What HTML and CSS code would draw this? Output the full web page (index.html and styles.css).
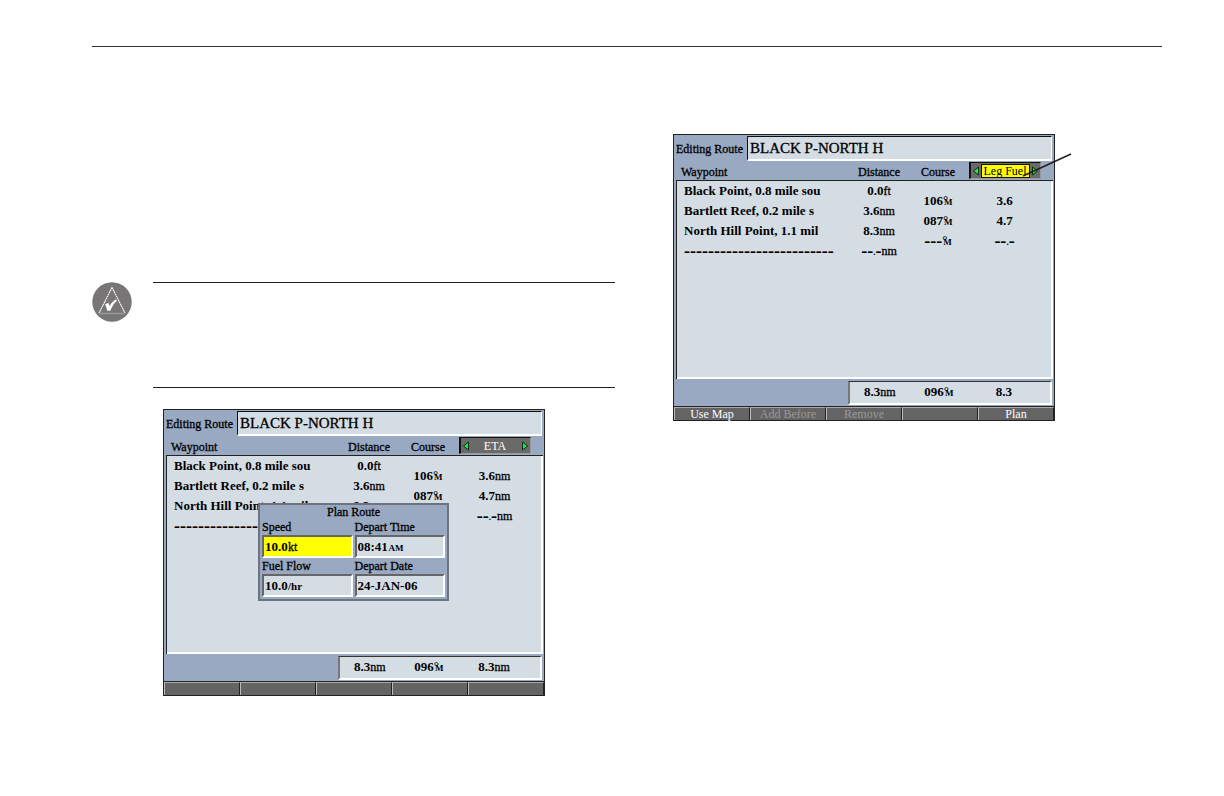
FILE: index.html
```html
<!DOCTYPE html>
<html lang="en">
<head>
<meta charset="utf-8">
<meta name="viewport" content="width=device-width, initial-scale=1">
<title>Route planning</title>
<link rel="stylesheet" href="styles.css">
</head>
<body>
<main class="page">
  <section class="column column-left">
    <div class="note">
      <svg class="note-icon" viewBox="0 0 40 40" aria-hidden="true">
        <circle cx="20" cy="20" r="19.7" fill="#777576"/>
        <path d="M20 5.500 7 31" fill="none" stroke="#fff" stroke-width="1.100" stroke-dasharray="1.800 .5"/>
        <path d="M20 5.500 33 31" fill="none" stroke="#fff" stroke-width="1.100" stroke-dasharray="1.800 .5"/>
        <path d="M7 31.500h26" stroke="#999" stroke-width="1.500"/>
        <path d="M13 22.500l3.200-1.800 1.400 3.300c1.600-2.800 3.400-5 6.400-6.800l.8 1.600c-2.600 2.700-4.700 5.500-6.500 10h-3c-.6-2.500-1.100-4.500-2.300-6.300z" fill="#fff"/>
      </svg>
      <div class="note-body"></div>
    </div>
    <div class="device">
      <div class="title-bar">
        <label for="route-a">Editing Route</label>
        <input id="route-a" class="route-name" type="text" value="BLACK P-NORTH H">
      </div>
      <table class="legs">
        <thead>
          <tr>
            <th class="c-way">Waypoint</th><th class="c-dist">Distance</th><th class="c-course">Course</th>
            <th class="c-value">
              <div class="selector">
                <button type="button" aria-label="Previous field"><svg viewBox="0 0 8 10"><path d="M6.500 1v8L1.500 5z"/></svg></button>
                <span class="selector-text">ETA</span>
                <button type="button" aria-label="Next field"><svg viewBox="0 0 8 10"><path d="M1.500 1v8l5-4z"/></svg></button>
              </div>
            </th>
          </tr>
        </thead>
        <tbody>
          <tr class="pad"><td colspan="4"></td></tr>
          <tr><td rowspan="2" class="c-way">Black Point, 0.8 mile sou</td><td rowspan="2">0.0<span class="unit">ft</span></td><td></td><td></td></tr>
          <tr><td rowspan="2">106<span class="deg">°</span><span class="mag">M</span></td><td rowspan="2" class="c-value">3.6<span class="unit">nm</span></td></tr>
          <tr><td rowspan="2" class="c-way">Bartlett Reef, 0.2 mile s</td><td rowspan="2">3.6<span class="unit">nm</span></td></tr>
          <tr><td rowspan="2">087<span class="deg">°</span><span class="mag">M</span></td><td rowspan="2" class="c-value">4.7<span class="unit">nm</span></td></tr>
          <tr><td rowspan="2" class="c-way">North Hill Point, 1.1 mil</td><td rowspan="2">8.3<span class="unit">nm</span></td></tr>
          <tr><td rowspan="2"><span class="blank">---</span><span class="deg">°</span><span class="mag">M</span></td><td rowspan="2" class="c-value"><span class="blank">--</span><span class="mag">.</span><span class="blank">-</span><span class="unit">nm</span></td></tr>
          <tr><td rowspan="2" class="c-way"><span class="blank">-------------------------</span></td><td rowspan="2"><span class="blank">--</span><span class="mag">.</span><span class="blank">-</span><span class="unit">nm</span></td></tr>
          <tr><td></td><td></td></tr>
          <tr class="rest"><td colspan="4"></td></tr>
        </tbody>
      </table>
      <div class="totals-bar">
        <div class="totals">
          <span>8.3<span class="unit">nm</span></span><span>096<span class="deg">°</span><span class="mag">M</span></span><span>8.3<span class="unit">nm</span></span>
        </div>
      </div>
      <div class="softkeys">
        <button type="button" aria-label="Key 1"></button><button type="button" aria-label="Key 2"></button><button type="button" aria-label="Key 3"></button><button type="button" aria-label="Key 4"></button><button type="button" aria-label="Key 5"></button>
      </div>
      <form class="plan">
        <h2>Plan Route</h2>
        <div class="plan-field">
          <label for="speed">Speed</label>
          <div class="box active"><input id="speed" class="w-num" type="text" value="10.0"><span class="unit">kt</span></div>
        </div>
        <div class="plan-field">
          <label for="time">Depart Time</label>
          <div class="box"><input id="time" class="w-time" type="text" value="08:41"><span class="mag">AM</span></div>
        </div>
        <div class="plan-field">
          <label for="flow">Fuel Flow</label>
          <div class="box"><input id="flow" class="w-num" type="text" value="10.0"><span class="rate">/hr</span></div>
        </div>
        <div class="plan-field">
          <label for="date">Depart Date</label>
          <div class="box"><input id="date" class="w-full" type="text" value="24-JAN-06"></div>
        </div>
      </form>
    </div>
  </section>

  <section class="column column-right">
    <div class="device">
      <div class="title-bar">
        <label for="route-b">Editing Route</label>
        <input id="route-b" class="route-name" type="text" value="BLACK P-NORTH H">
      </div>
      <table class="legs">
        <thead>
          <tr>
            <th class="c-way">Waypoint</th><th class="c-dist">Distance</th><th class="c-course">Course</th>
            <th class="c-value">
              <div class="selector">
                <button type="button" aria-label="Previous field"><svg viewBox="0 0 8 10"><path d="M6.500 1v8L1.500 5z"/></svg></button>
                <span class="selector-text chosen">Leg Fuel</span>
                <button type="button" aria-label="Next field"><svg viewBox="0 0 8 10"><path d="M1.500 1v8l5-4z"/></svg></button>
              </div>
            </th>
          </tr>
        </thead>
        <tbody>
          <tr class="pad"><td colspan="4"></td></tr>
          <tr><td rowspan="2" class="c-way">Black Point, 0.8 mile sou</td><td rowspan="2">0.0<span class="unit">ft</span></td><td></td><td></td></tr>
          <tr><td rowspan="2">106<span class="deg">°</span><span class="mag">M</span></td><td rowspan="2" class="c-value">3.6</td></tr>
          <tr><td rowspan="2" class="c-way">Bartlett Reef, 0.2 mile s</td><td rowspan="2">3.6<span class="unit">nm</span></td></tr>
          <tr><td rowspan="2">087<span class="deg">°</span><span class="mag">M</span></td><td rowspan="2" class="c-value">4.7</td></tr>
          <tr><td rowspan="2" class="c-way">North Hill Point, 1.1 mil</td><td rowspan="2">8.3<span class="unit">nm</span></td></tr>
          <tr><td rowspan="2"><span class="blank">---</span><span class="deg">°</span><span class="mag">M</span></td><td rowspan="2" class="c-value"><span class="blank">--</span><span class="mag">.</span><span class="blank">-</span></td></tr>
          <tr><td rowspan="2" class="c-way"><span class="blank">-------------------------</span></td><td rowspan="2"><span class="blank">--</span><span class="mag">.</span><span class="blank">-</span><span class="unit">nm</span></td></tr>
          <tr><td></td><td></td></tr>
          <tr class="rest"><td colspan="4"></td></tr>
        </tbody>
      </table>
      <div class="totals-bar">
        <div class="totals">
          <span>8.3<span class="unit">nm</span></span><span>096<span class="deg">°</span><span class="mag">M</span></span><span>8.3</span>
        </div>
      </div>
      <div class="softkeys">
        <button type="button">Use Map</button><button type="button" disabled>Add Before</button><button type="button" disabled>Remove</button><button type="button" aria-label="Key 4"></button><button type="button">Plan</button>
      </div>
      <svg class="pointer" viewBox="0 0 50 24" aria-hidden="true"><path d="M1 23 49 1" stroke="#231f20" stroke-width="1.500"/></svg>
    </div>
  </section>
</main>
</body>
</html>
```
FILE: styles.css
```css
* { box-sizing: border-box; }

body {
  margin: 0;
  background: #fff;
  color: #000;
  font: 12px/20px "Liberation Serif", serif;
}

button, input { font: inherit; color: inherit; }

.page {
  margin: 46px 62px 0 92px;
  border-top: 1px solid #333;
  display: grid;
  grid-template-columns: minmax(0, 523fr) minmax(0, 489fr);
  gap: 58px;
  align-items: start;
}

.column-left { padding-top: 235px; }
.column-right { padding-top: 87px; }
.column-left .device { margin: 21px 0 0 71px; }

.note {
  display: grid;
  grid-template-columns: 40px 1fr;
  gap: 21px;
}
.note-icon { width: 40px; height: 40px; }
.note-body {
  min-height: 106px;
  border-top: 1px solid #231f20;
  border-bottom: 1px solid #231f20;
}

.device {
  position: relative;
  max-width: 382px;
  border: 1px solid #222;
  background: #99a9c2;
}

.title-bar {
  display: flex;
  align-items: center;
  padding: 1px 2px 0 1px;
}
.title-bar label {
  flex: 0 0 72px;
  padding-left: 1px;
  -webkit-text-stroke: 0.3px #000;
}
.route-name {
  flex: 1;
  min-width: 0;
  height: 25px;
  padding: 0 2px;
  border: 1px solid #fff;
  border-bottom-width: 2px;
  border-top-color: #111;
  border-left-color: #111;
  border-radius: 0;
  background: #d5dde4;
  font-size: 15px;
  -webkit-text-stroke: 0.3px #000;
}

.legs {
  width: 100%;
  padding: 0 1px 0 2px;
  table-layout: fixed;
  border-spacing: 0;
}
.legs th, .legs td {
  height: 10px;
  padding: 0;
  line-height: 20px;
  text-align: center;
  white-space: nowrap;
}
.legs th {
  height: 19px;
  padding-top: 3px;
  font-weight: 400;
  line-height: 16px;
  vertical-align: top;
  -webkit-text-stroke: 0.3px #000;
}
.legs td { font-size: 13px; font-weight: 700; }
.legs .c-way { padding-left: 8px; text-align: left; }
.legs th.c-way { width: 168px; padding-left: 5px; }
.c-dist { width: 70px; }
.c-course { width: 48px; }
.legs .c-value { padding-right: 6px; }
.legs th.c-value { padding-top: 1px; }
.legs tbody {
  background: #d5dde4;
  box-shadow: inset 1px 1px #222, inset -2px -2px #fff;
}
.legs .pad td { height: 1px; line-height: 1px; }
.legs .rest td { height: 118px; }
.legs td[rowspan="2"] { height: 20px; }

.blank, .unit, .deg, .mag, .rate { line-height: 0; }
.blank { font-size: 18px; vertical-align: -2px; }
.unit {
  font-size: 12px;
  font-weight: 400;
  -webkit-text-stroke: 0.3px #000;
}
.deg { margin-right: -4px; vertical-align: 1px; }
.mag { font-size: 9px; }
.rate { font-size: 11px; font-weight: 700; }

.selector {
  display: flex;
  align-items: center;
  justify-content: space-between;
  width: 72px;
  height: 17px;
  margin: 0 auto;
  padding: 0 1px;
  border: 1px solid #999;
  border-top-color: #111;
  border-left: 2px solid #111;
  background: #6a6a6a;
}
.selector button {
  display: flex;
  padding: 0;
  border: 0;
  background: none;
}
.selector svg { width: 8px; height: 10px; fill: #2fe044; stroke: #031; }
.selector-text {
  padding: 0 2px;
  color: #fff;
  line-height: 12px;
  -webkit-text-stroke: 0;
}
.chosen {
  border: 1px solid #111;
  background: #ff0;
  color: #000;
}

.totals-bar {
  display: flex;
  justify-content: flex-end;
  padding: 2px 2px 1px 0;
  border-bottom: 1px solid #222;
}
.totals {
  display: grid;
  grid-template-columns: 60px 58px 1fr;
  width: 54%;
  height: 24px;
  border: 2px solid #fff;
  border-top: 1px solid #333;
  border-left-color: #777;
  background: #d5dde4;
  font-size: 13px;
  font-weight: 700;
  line-height: 20px;
  text-align: center;
}
.totals > :last-child { padding-right: 10px; }

.softkeys {
  display: grid;
  grid-template-columns: repeat(5, 1fr);
  height: 13px;
}
.softkeys button {
  padding: 0;
  border: 0;
  border-top: 1px solid #aaa;
  border-left: 1px solid #bbb;
  border-right: 1px solid #222;
  border-radius: 0;
  background: #646464;
  color: #fff;
  line-height: 12px;
}
.softkeys button:disabled { color: #999; }

.plan {
  position: absolute;
  top: 93px;
  left: 94px;
  width: 191px;
  padding: 1px 2px 2px;
  display: grid;
  grid-template-columns: 1fr 1fr;
  column-gap: 2px;
  border: 2px solid #6b7480;
  background: #99a9c2;
}
.plan h2 {
  grid-column: 1 / -1;
  margin: 0;
  font-size: 12px;
  font-weight: 400;
  line-height: 13px;
  text-align: center;
  -webkit-text-stroke: 0.3px #000;
}
.plan label {
  display: block;
  line-height: 16px;
  -webkit-text-stroke: 0.3px #000;
}
.box {
  display: flex;
  align-items: baseline;
  height: 23px;
  padding: 0 1px;
  border: 2px solid #fff;
  border-top-color: #666;
  border-left-color: #666;
  background: #d5dde4;
}
.box.active { background: #ff0; }
.box input {
  height: 19px;
  padding: 0;
  border: 0;
  background: none;
  font-size: 13px;
  font-weight: 700;
}
.box .mag { font-weight: 700; }
.w-num { width: 23px; }
.w-time { width: 31px; }
.w-full { width: 100%; }

.pointer {
  position: absolute;
  top: 18px;
  right: -18px;
  width: 50px;
  height: 24px;
}
```
